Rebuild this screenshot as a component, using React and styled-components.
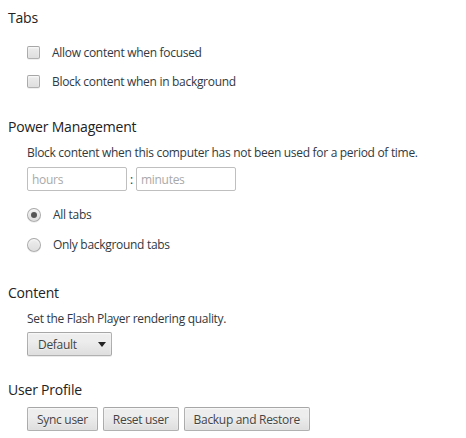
import React, { useState } from "react";
import styled, { createGlobalStyle } from "styled-components";

const GlobalStyle = createGlobalStyle`
  html, body {
    margin: 0;
    padding: 0;
    background: #ffffff;
  }
  body {
    font-family: "Open Sans", "Noto Sans", sans-serif;
    font-size: 12px;
    letter-spacing: -0.3px;
    color: #303942;
  }
`;

function App() {
  const [allowFocused, setAllowFocused] = useState(false);
  const [blockBackground, setBlockBackground] = useState(false);
  const [tabMode, setTabMode] = useState("all");

  return (
    <>
      <GlobalStyle />
      <Page>
        <Section>
          <Heading>Tabs</Heading>
          <Body>
            <OptionList $top={4}>
              <OptionRow>
                <Checkbox
                  type="checkbox"
                  checked={allowFocused}
                  onChange={() => setAllowFocused(!allowFocused)}
                />
                <Label>Allow content when focused</Label>
              </OptionRow>
              <OptionRow>
                <Checkbox
                  type="checkbox"
                  checked={blockBackground}
                  onChange={() => setBlockBackground(!blockBackground)}
                />
                <Label>Block content when in background</Label>
              </OptionRow>
            </OptionList>
          </Body>
        </Section>

        <Section>
          <Heading>Power Management</Heading>
          <Body>
            <Text>Block content when this computer has not been used for a period of time.</Text>
            <TimeRow>
              <TimeInput placeholder="hours" />
              <Colon>:</Colon>
              <TimeInput placeholder="minutes" />
            </TimeRow>
            <OptionList $top={9} $bottom={2}>
              <OptionRow $height={30}>
                <Radio
                  type="radio"
                  name="tabs"
                  checked={tabMode === "all"}
                  onChange={() => setTabMode("all")}
                />
                <Label>All tabs</Label>
              </OptionRow>
              <OptionRow $height={30}>
                <Radio
                  type="radio"
                  name="tabs"
                  checked={tabMode === "background"}
                  onChange={() => setTabMode("background")}
                />
                <Label>Only background tabs</Label>
              </OptionRow>
            </OptionList>
          </Body>
        </Section>

        <Section>
          <Heading>Content</Heading>
          <Body>
            <Text>Set the Flash Player rendering quality.</Text>
            <Select>
              <span>Default</span>
              <Arrow />
            </Select>
          </Body>
        </Section>

        <Section>
          <Heading>User Profile</Heading>
          <Body>
            <ButtonRow>
              <Button>Sync user</Button>
              <Button>Reset user</Button>
              <Button>Backup and Restore</Button>
            </ButtonRow>
          </Body>
        </Section>
      </Page>
    </>
  );
}

const Page = styled("div")`
  padding: 8px 8px 0 8px;
  display: flex;
  flex-direction: column;
  gap: 21px;
`;

const Section = styled("section")`
  display: flex;
  flex-direction: column;
`;

const Heading = styled("h3")`
  margin: 0;
  font-size: 14px;
  font-weight: 400;
  line-height: 20px;
  letter-spacing: -0.2px;
  color: #222;
`;

const Body = styled("div")`
  padding-left: 19px;
  display: flex;
  flex-direction: column;
  padding-top: 6px;
`;

const OptionList = styled("div")`
  display: flex;
  flex-direction: column;
  margin-top: ${(p) => p.$top || 0}px;
  margin-bottom: ${(p) => p.$bottom || 0}px;
`;

const OptionRow = styled("label")`
  display: flex;
  align-items: center;
  height: ${(p) => p.$height || 29}px;
`;

const Label = styled("span")`
  line-height: 16px;
`;

const Checkbox = styled("input")`
  appearance: none;
  margin: 0 12px 0 0;
  width: 13px;
  height: 13px;
  border: 1px solid rgba(0, 0, 0, 0.25);
  border-radius: 2px;
  box-sizing: border-box;
  background: linear-gradient(#ededed, #dedede);
  box-shadow: inset 0 1px 2px rgba(255, 255, 255, 0.75), 0 1px 0 rgba(0, 0, 0, 0.06);
`;

const Radio = styled("input")`
  appearance: none;
  margin: 0 12px 0 0;
  width: 14px;
  height: 14px;
  border: 1px solid rgba(0, 0, 0, 0.25);
  border-radius: 50%;
  box-sizing: border-box;
  background: linear-gradient(#ededed, #dedede);
  box-shadow: inset 0 1px 2px rgba(255, 255, 255, 0.75), 0 1px 0 rgba(0, 0, 0, 0.06);
  position: relative;

  &:checked::after {
    content: "";
    position: absolute;
    left: 3px;
    top: 3px;
    width: 6px;
    height: 6px;
    border-radius: 50%;
    background: #555;
  }
`;

const Text = styled("div")`
  line-height: 20px;
`;

const TimeRow = styled("div")`
  display: flex;
  align-items: center;
  margin-top: 4px;
`;

const TimeInput = styled("input")`
  width: 100px;
  height: 24px;
  box-sizing: border-box;
  border: 1px solid #bfbfbf;
  border-radius: 2px;
  padding: 0 4px;
  font-family: inherit;
  font-size: 12px;
  letter-spacing: inherit;
  color: #303942;

  &::placeholder {
    color: #a9a9a9;
  }
`;

const Colon = styled("span")`
  width: 9px;
  text-align: center;
`;

const ButtonBase = styled("button")`
  height: 24px;
  box-sizing: border-box;
  border: 1px solid rgba(0, 0, 0, 0.25);
  border-radius: 2px;
  background: linear-gradient(#ededed, #ededed 38%, #dedede);
  box-shadow: inset 0 1px 2px rgba(255, 255, 255, 0.75), 0 1px 0 rgba(0, 0, 0, 0.08);
  color: #444;
  font-family: inherit;
  font-size: 12px;
  letter-spacing: inherit;
  padding: 0 9px;
  text-shadow: 0 1px 0 rgb(240, 240, 240);
`;

const Select = styled(ButtonBase)`
  margin-top: 3px;
  margin-bottom: 3px;
  width: 85px;
  display: flex;
  align-items: center;
  justify-content: space-between;
  padding: 0 5px 0 10px;
`;

const Arrow = styled("span")`
  width: 0;
  height: 0;
  border-left: 4.5px solid transparent;
  border-right: 4.5px solid transparent;
  border-top: 5px solid #222;
`;

const ButtonRow = styled("div")`
  display: flex;
  gap: 5px;
  padding-top: 1px;
`;

const Button = styled(ButtonBase)``;

export default App;
